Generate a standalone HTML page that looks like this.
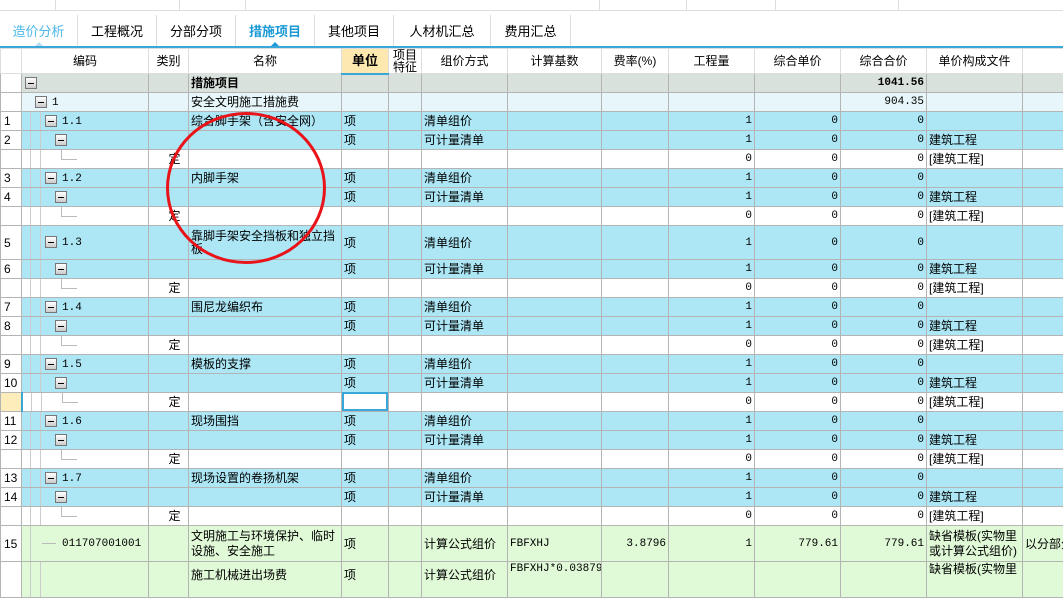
<!DOCTYPE html>
<html><head><meta charset="utf-8"><style>
*{margin:0;padding:0;box-sizing:border-box}
body{width:1063px;height:571px;overflow:hidden;background:#fff;font-family:"Liberation Sans","Noto Sans CJK SC",sans-serif;font-size:12px;color:#000;position:relative}
.top{position:absolute;left:0;top:0;width:1063px;height:11px;border-bottom:1px solid #ddd}
.top i{position:absolute;top:0;height:10px;border-left:1px solid #ddd}
.tabs{position:absolute;left:0;top:11px;width:1063px;height:35px}
.tab{position:absolute;top:4px;height:31px;line-height:33px;text-align:center;font-size:13px;border-right:1px solid #ddd}
.tab.a{color:#1a9ad6;font-weight:bold}
.tab.f{color:#4db8e8}
.tri{position:absolute;bottom:-1px;left:50%;margin-left:-5px;width:0;height:0;border-left:5px solid transparent;border-right:5px solid transparent;border-bottom:5px solid #1a9ad6}
.blue{position:absolute;left:0;top:46px;width:1063px;height:2px;background:#3ba7d8}
table{position:absolute;left:0;top:48px;border-collapse:collapse;table-layout:fixed;width:1080px}
td{border:1px solid #b4b4b4;height:19px;padding:0 2px;white-space:nowrap;overflow:hidden;vertical-align:middle;line-height:14px}
thead td{height:25px;text-align:center;background:#fff;border-color:#ddd;font-size:12px}
thead td.u{background:#fde9b0;font-weight:bold;border-bottom:2px solid #3ba7d8;font-size:13px}
td.r{text-align:right;font-family:"Liberation Mono","Noto Sans CJK SC",monospace;font-size:11px}
td.d{text-align:center;padding-left:14px}
td.rn{background:#fff;text-align:left;padding-left:3px;font-size:12px}
tr.g td{background:#d9e1dc}
tr.l td{background:#e6f6fa}
tr.b td{background:#ade7f6}
tr.w td{background:#fff}
tr.gr td{background:#e0f9d7}
tr td.rn{background:#fff}
td.c{position:relative;font-family:"Liberation Mono",monospace;font-size:11px;background-image:linear-gradient(#ccc,#ccc),linear-gradient(#ccc,#ccc)!important;background-size:1px 100%,1px 100%!important;background-repeat:no-repeat!important;background-position:8px 0,18px 0!important}
.bx{position:absolute;top:3px;width:12px;height:12px;border:1px solid #777;background:linear-gradient(#fff,#ccc)}
.bx:after{content:"";position:absolute;left:2px;right:2px;top:5px;height:1px;background:#000}
.el{position:absolute;top:0;width:16px;height:10px;border-left:1px solid #bbb;border-bottom:1px solid #bbb}
.t{position:absolute;top:3px}
.hl{position:absolute;top:9px;width:14px;height:1px;background:#bbb}
.ell{position:absolute;left:166px;top:112px;width:160px;height:152px;border:3px solid #e8141a;border-radius:50%}
.sel{position:absolute;left:342px;top:392px;width:46px;height:19px;border:2px solid #3ba7d8}
</style></head><body>
<div class="top"><i style="left:55px"></i><i style="left:179px"></i><i style="left:245px"></i><i style="left:599px"></i><i style="left:686px"></i><i style="left:775px"></i><i style="left:898px"></i></div>
<div class="tabs">
<div class="tab f" style="left:0;width:78px">造价分析<div class="tri" style="border-bottom-color:#b8e0f2"></div></div>
<div class="tab" style="left:78px;width:79px">工程概况</div>
<div class="tab" style="left:157px;width:79px">分部分项</div>
<div class="tab a" style="left:236px;width:79px">措施项目<div class="tri"></div></div>
<div class="tab" style="left:315px;width:79px">其他项目</div>
<div class="tab" style="left:394px;width:97px">人材机汇总</div>
<div class="tab" style="left:491px;width:80px">费用汇总</div>
</div>
<div class="blue"></div>
<table>
<colgroup><col style="width:21px"><col style="width:127px"><col style="width:40px"><col style="width:153px"><col style="width:47px"><col style="width:33px"><col style="width:86px"><col style="width:94px"><col style="width:67px"><col style="width:86px"><col style="width:86px"><col style="width:86px"><col style="width:96px"><col style="width:58px"></colgroup>
<thead><tr><td></td><td>编码</td><td>类别</td><td>名称</td><td class="u">单位</td><td style="line-height:12px;font-size:12px">项目<br>特征</td><td>组价方式</td><td>计算基数</td><td>费率(%)</td><td>工程量</td><td>综合单价</td><td>综合合价</td><td>单价构成文件</td><td></td></tr></thead>
<tbody>
<tr class="g"><td class="rn"></td><td style="position:relative"><span class="bx" style="left:3px"></span></td><td></td><td><b>措施项目</b></td><td></td><td></td><td></td><td></td><td></td><td></td><td></td><td class="r"><b>1041.56</b></td><td></td><td></td></tr>
<tr class="l"><td class="rn"></td><td style="position:relative"><span class="bx" style="left:13px"></span><span class="t" style="left:30px;font-family:'Liberation Mono';font-size:11px">1</span></td><td></td><td>安全文明施工措施费</td><td></td><td></td><td></td><td></td><td></td><td></td><td></td><td class="r">904.35</td><td></td><td></td></tr>

<tr class="b"><td class="rn">1</td><td class="c"><span class="bx" style="left:23px"></span><span class="t" style="left:40px">1.1</span></td><td></td><td>综合脚手架（含安全网）</td><td>项</td><td></td><td>清单组价</td><td></td><td></td><td class="r">1</td><td class="r">0</td><td class="r">0</td><td></td><td></td></tr>
<tr class="b"><td class="rn">2</td><td class="c"><span class="bx" style="left:33px"></span></td><td></td><td></td><td>项</td><td></td><td>可计量清单</td><td></td><td></td><td class="r">1</td><td class="r">0</td><td class="r">0</td><td>建筑工程</td><td></td></tr>
<tr class="w"><td class="rn"></td><td class="c"><span class="el" style="left:39px"></span></td><td class="d">定</td><td></td><td></td><td></td><td></td><td></td><td></td><td class="r">0</td><td class="r">0</td><td class="r">0</td><td>[建筑工程]</td><td></td></tr>

<tr class="b"><td class="rn">3</td><td class="c"><span class="bx" style="left:23px"></span><span class="t" style="left:40px">1.2</span></td><td></td><td>内脚手架</td><td>项</td><td></td><td>清单组价</td><td></td><td></td><td class="r">1</td><td class="r">0</td><td class="r">0</td><td></td><td></td></tr>
<tr class="b"><td class="rn">4</td><td class="c"><span class="bx" style="left:33px"></span></td><td></td><td></td><td>项</td><td></td><td>可计量清单</td><td></td><td></td><td class="r">1</td><td class="r">0</td><td class="r">0</td><td>建筑工程</td><td></td></tr>
<tr class="w"><td class="rn"></td><td class="c"><span class="el" style="left:39px"></span></td><td class="d">定</td><td></td><td></td><td></td><td></td><td></td><td></td><td class="r">0</td><td class="r">0</td><td class="r">0</td><td>[建筑工程]</td><td></td></tr>

<tr class="b"><td class="rn" style="height:34px">5</td><td class="c"><span class="bx" style="left:23px;top:10px"></span><span class="t" style="left:40px;top:10px">1.3</span></td><td></td><td style="white-space:normal;line-height:13px">靠脚手架安全挡板和独立挡板</td><td>项</td><td></td><td>清单组价</td><td></td><td></td><td class="r">1</td><td class="r">0</td><td class="r">0</td><td></td><td></td></tr>
<tr class="b"><td class="rn">6</td><td class="c"><span class="bx" style="left:33px"></span></td><td></td><td></td><td>项</td><td></td><td>可计量清单</td><td></td><td></td><td class="r">1</td><td class="r">0</td><td class="r">0</td><td>建筑工程</td><td></td></tr>
<tr class="w"><td class="rn"></td><td class="c"><span class="el" style="left:39px"></span></td><td class="d">定</td><td></td><td></td><td></td><td></td><td></td><td></td><td class="r">0</td><td class="r">0</td><td class="r">0</td><td>[建筑工程]</td><td></td></tr>

<tr class="b"><td class="rn">7</td><td class="c"><span class="bx" style="left:23px"></span><span class="t" style="left:40px">1.4</span></td><td></td><td>围尼龙编织布</td><td>项</td><td></td><td>清单组价</td><td></td><td></td><td class="r">1</td><td class="r">0</td><td class="r">0</td><td></td><td></td></tr>
<tr class="b"><td class="rn">8</td><td class="c"><span class="bx" style="left:33px"></span></td><td></td><td></td><td>项</td><td></td><td>可计量清单</td><td></td><td></td><td class="r">1</td><td class="r">0</td><td class="r">0</td><td>建筑工程</td><td></td></tr>
<tr class="w"><td class="rn"></td><td class="c"><span class="el" style="left:39px"></span></td><td class="d">定</td><td></td><td></td><td></td><td></td><td></td><td></td><td class="r">0</td><td class="r">0</td><td class="r">0</td><td>[建筑工程]</td><td></td></tr>

<tr class="b"><td class="rn">9</td><td class="c"><span class="bx" style="left:23px"></span><span class="t" style="left:40px">1.5</span></td><td></td><td>模板的支撑</td><td>项</td><td></td><td>清单组价</td><td></td><td></td><td class="r">1</td><td class="r">0</td><td class="r">0</td><td></td><td></td></tr>
<tr class="b"><td class="rn">10</td><td class="c"><span class="bx" style="left:33px"></span></td><td></td><td></td><td>项</td><td></td><td>可计量清单</td><td></td><td></td><td class="r">1</td><td class="r">0</td><td class="r">0</td><td>建筑工程</td><td></td></tr>
<tr class="w"><td class="rn" style="background:#fdedbb;border-right:2px solid #3ba7d8"></td><td class="c"><span class="el" style="left:39px"></span></td><td class="d">定</td><td></td><td></td><td></td><td></td><td></td><td></td><td class="r">0</td><td class="r">0</td><td class="r">0</td><td>[建筑工程]</td><td></td></tr>

<tr class="b"><td class="rn">11</td><td class="c"><span class="bx" style="left:23px"></span><span class="t" style="left:40px">1.6</span></td><td></td><td>现场围挡</td><td>项</td><td></td><td>清单组价</td><td></td><td></td><td class="r">1</td><td class="r">0</td><td class="r">0</td><td></td><td></td></tr>
<tr class="b"><td class="rn">12</td><td class="c"><span class="bx" style="left:33px"></span></td><td></td><td></td><td>项</td><td></td><td>可计量清单</td><td></td><td></td><td class="r">1</td><td class="r">0</td><td class="r">0</td><td>建筑工程</td><td></td></tr>
<tr class="w"><td class="rn"></td><td class="c"><span class="el" style="left:39px"></span></td><td class="d">定</td><td></td><td></td><td></td><td></td><td></td><td></td><td class="r">0</td><td class="r">0</td><td class="r">0</td><td>[建筑工程]</td><td></td></tr>

<tr class="b"><td class="rn">13</td><td class="c"><span class="bx" style="left:23px"></span><span class="t" style="left:40px">1.7</span></td><td></td><td>现场设置的卷扬机架</td><td>项</td><td></td><td>清单组价</td><td></td><td></td><td class="r">1</td><td class="r">0</td><td class="r">0</td><td></td><td></td></tr>
<tr class="b"><td class="rn">14</td><td class="c"><span class="bx" style="left:33px"></span></td><td></td><td></td><td>项</td><td></td><td>可计量清单</td><td></td><td></td><td class="r">1</td><td class="r">0</td><td class="r">0</td><td>建筑工程</td><td></td></tr>
<tr class="w"><td class="rn"></td><td class="c"><span class="el" style="left:39px"></span></td><td class="d">定</td><td></td><td></td><td></td><td></td><td></td><td></td><td class="r">0</td><td class="r">0</td><td class="r">0</td><td>[建筑工程]</td><td></td></tr>

<tr class="gr"><td class="rn" style="height:36px">15</td><td class="c" style="background-position:8px 0,18px 50%!important;background-size:1px 100%,0 0!important"><span class="hl" style="left:20px;top:17px"></span><span class="t" style="left:40px;top:11px">011707001001</span></td><td></td><td style="white-space:normal;line-height:15px">文明施工与环境保护、临时设施、安全施工</td><td>项</td><td></td><td>计算公式组价</td><td style="font-family:'Liberation Mono';font-size:11px">FBFXHJ</td><td class="r">3.8796</td><td class="r">1</td><td class="r">779.61</td><td class="r">779.61</td><td style="white-space:normal;line-height:15px;font-size:12px">缺省模板(实物里或计算公式组价)</td><td>以分部分</td></tr>
<tr class="gr"><td class="rn" style="height:36px"></td><td class="c"></td><td></td><td style="vertical-align:top;padding-top:6px">施工机械进出场费</td><td style="vertical-align:top;padding-top:6px">项</td><td></td><td style="vertical-align:top;padding-top:6px">计算公式组价</td><td style="vertical-align:top;font-family:'Liberation Mono';font-size:11px">FBFXHJ*0.03879</td><td></td><td></td><td></td><td></td><td style="vertical-align:top">缺省模板(实物里</td><td></td></tr>
</tbody></table>
<div class="sel"></div>
<div class="ell"></div>
</body></html>
